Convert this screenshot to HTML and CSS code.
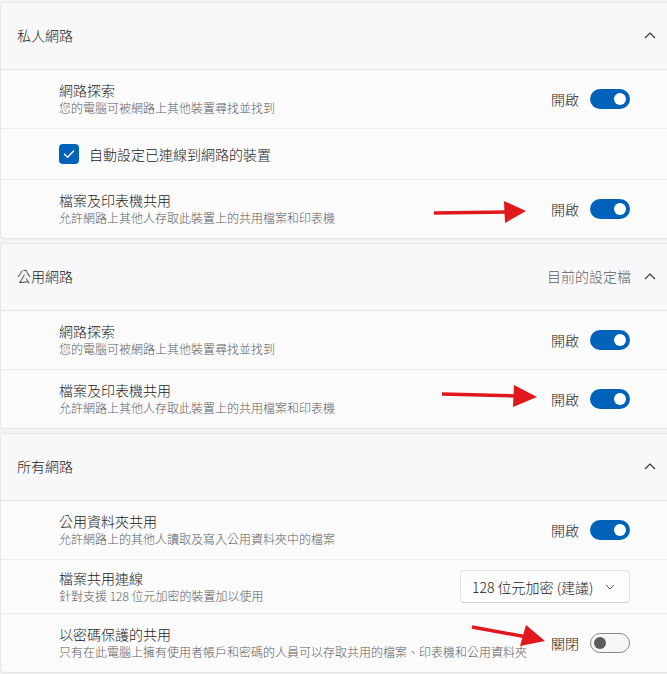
FILE: index.html
```html
<!DOCTYPE html>
<html lang="zh-Hant">
<head>
<meta charset="utf-8">
<link rel="stylesheet" href="styles.css">
</head>
<body>
<div class="page">
  <section class="card">
    <div class="card-head">
      <span class="head-title">私人網路</span>
      <span class="head-right">
        <svg class="chev" viewBox="0 0 12 8" width="12" height="8"><path d="M1 7 L6 2 L11 7" fill="none" stroke="#333" stroke-width="1.1"/></svg>
      </span>
    </div>
    <div class="row">
      <div class="texts">
        <div class="t">網路探索</div>
        <div class="s">您的電腦可被網路上其他裝置尋找並找到</div>
      </div>
      <div class="ctrl"><span class="lbl">開啟</span><span class="toggle on"><span class="knob"></span></span></div>
    </div>
    <div class="row row-check">
      <span class="checkbox"><svg viewBox="0 0 20 20" width="20" height="20"><path d="M5.5 10.3 L8.6 13.3 L14.6 7" fill="none" stroke="#fff" stroke-width="1.4" stroke-linecap="round" stroke-linejoin="round"/></svg></span>
      <span class="t">自動設定已連線到網路的裝置</span>
    </div>
    <div class="row">
      <div class="texts">
        <div class="t">檔案及印表機共用</div>
        <div class="s">允許網路上其他人存取此裝置上的共用檔案和印表機</div>
      </div>
      <div class="ctrl"><span class="lbl">開啟</span><span class="toggle on"><span class="knob"></span></span></div>
    </div>
  </section>

  <section class="card">
    <div class="card-head">
      <span class="head-title">公用網路</span>
      <span class="head-right">
        <span class="head-note">目前的設定檔</span>
        <svg class="chev" viewBox="0 0 12 8" width="12" height="8"><path d="M1 7 L6 2 L11 7" fill="none" stroke="#333" stroke-width="1.1"/></svg>
      </span>
    </div>
    <div class="row">
      <div class="texts">
        <div class="t">網路探索</div>
        <div class="s">您的電腦可被網路上其他裝置尋找並找到</div>
      </div>
      <div class="ctrl"><span class="lbl">開啟</span><span class="toggle on"><span class="knob"></span></span></div>
    </div>
    <div class="row">
      <div class="texts">
        <div class="t">檔案及印表機共用</div>
        <div class="s">允許網路上其他人存取此裝置上的共用檔案和印表機</div>
      </div>
      <div class="ctrl"><span class="lbl">開啟</span><span class="toggle on"><span class="knob"></span></span></div>
    </div>
  </section>

  <section class="card">
    <div class="card-head">
      <span class="head-title">所有網路</span>
      <span class="head-right">
        <svg class="chev" viewBox="0 0 12 8" width="12" height="8"><path d="M1 7 L6 2 L11 7" fill="none" stroke="#333" stroke-width="1.1"/></svg>
      </span>
    </div>
    <div class="row">
      <div class="texts">
        <div class="t">公用資料夾共用</div>
        <div class="s">允許網路上的其他人讀取及寫入公用資料夾中的檔案</div>
      </div>
      <div class="ctrl"><span class="lbl">開啟</span><span class="toggle on"><span class="knob"></span></span></div>
    </div>
    <div class="row row-short">
      <div class="texts">
        <div class="t">檔案共用連線</div>
        <div class="s">針對支援 128 位元加密的裝置加以使用</div>
      </div>
      <div class="ctrl">
        <span class="select">128 位元加密 (建議)
          <svg class="sel-chev" viewBox="0 0 10 6" width="10" height="6"><path d="M1 1 L5 5 L9 1" fill="none" stroke="#555" stroke-width="1"/></svg>
        </span>
      </div>
    </div>
    <div class="row">
      <div class="texts">
        <div class="t">以密碼保護的共用</div>
        <div class="s">只有在此電腦上擁有使用者帳戶和密碼的人員可以存取共用的檔案、印表機和公用資料夾</div>
      </div>
      <div class="ctrl"><span class="lbl">關閉</span><span class="toggle off"><span class="knob"></span></span></div>
    </div>
  </section>

  <svg class="arrows" width="667" height="674" viewBox="0 0 667 674">
    <g fill="#e0181b" stroke="#e0181b">
      <line x1="434" y1="213" x2="508" y2="212" stroke-width="3.5"/>
      <polygon points="504,201 526,211 505,223" stroke="none"/>
      <line x1="442" y1="394" x2="518" y2="396" stroke-width="3.5"/>
      <polygon points="514,385 537,397 513,407" stroke="none"/>
      <line x1="472" y1="627" x2="527" y2="637" stroke-width="3.5"/>
      <polygon points="526,625 545,641 520,646" stroke="none"/>
    </g>
  </svg>
</div>
</body>
</html>
```

FILE: styles.css
```css
* { box-sizing: border-box; }

html, body {
  margin: 0;
  padding: 0;
}

body {
  background: #f3f3f3;
  font-family: "Noto Sans CJK TC", "Noto Sans", sans-serif;
  font-weight: 300;
  color: #1b1b1b;
  width: 667px;
  height: 674px;
  overflow: hidden;
}

.page {
  position: relative;
  padding-top: 2px;
  display: flex;
  flex-direction: column;
  gap: 4px;
}

.card {
  margin-right: -8px;
  background: #fbfbfc;
  border: 1px solid #e6e6e6;
  border-radius: 4px;
  overflow: hidden;
}

.card-head {
  height: 67px;
  display: flex;
  align-items: center;
  justify-content: space-between;
  padding: 0 18px 3px 16px;
  background: #f8f8fa;
  border-bottom: 1px solid #e3e3e3;
  font-size: 14px;
}

.head-right {
  display: flex;
  align-items: center;
  gap: 13px;
}

.head-note {
  color: #5e5e5e;
}

.chev { display: block; }

.row {
  height: 59px;
  display: flex;
  align-items: center;
  justify-content: space-between;
  padding: 0 44px 0 58px;
  border-bottom: 1px solid #ebebeb;
}

.row:last-child { border-bottom: none; height: 58px; }

.row-check {
  height: 51px;
  justify-content: flex-start;
  gap: 10px;
}

.row-short { height: 54px; }

.texts {
  display: flex;
  flex-direction: column;
  gap: 1px;
}

.t {
  font-size: 14px;
  line-height: 17px;
  color: #1b1b1b;
}

.s {
  font-size: 12px;
  line-height: 16px;
  color: #5c5c5c;
}

.ctrl {
  display: flex;
  align-items: center;
  gap: 11px;
}

.lbl {
  font-size: 14px;
  color: #1b1b1b;
}

.toggle {
  width: 40px;
  height: 20px;
  border-radius: 10px;
  display: flex;
  align-items: center;
  padding: 0 4px;
}

.toggle.on {
  background: #0062b9;
  justify-content: flex-end;
}

.toggle.off {
  background: #f6f6f6;
  border: 1px solid #8a8a8a;
  justify-content: flex-start;
  padding: 0 3px;
}

.knob {
  width: 12px;
  height: 12px;
  border-radius: 50%;
  background: #fff;
}

.toggle.off .knob {
  background: #5c5c5c;
}

.checkbox {
  width: 20px;
  height: 20px;
  border-radius: 4px;
  background: #0062b9;
  display: flex;
}

.select {
  width: 170px;
  height: 33px;
  background: #fdfdfd;
  border: 1px solid #e2e2e2;
  border-bottom-color: #d2d2d2;
  border-radius: 4px;
  display: flex;
  align-items: center;
  justify-content: space-between;
  padding: 0 14px 0 11px;
  font-size: 14px;
  color: #1b1b1b;
}

.arrows {
  position: absolute;
  left: 0;
  top: 0;
  pointer-events: none;
}
```
